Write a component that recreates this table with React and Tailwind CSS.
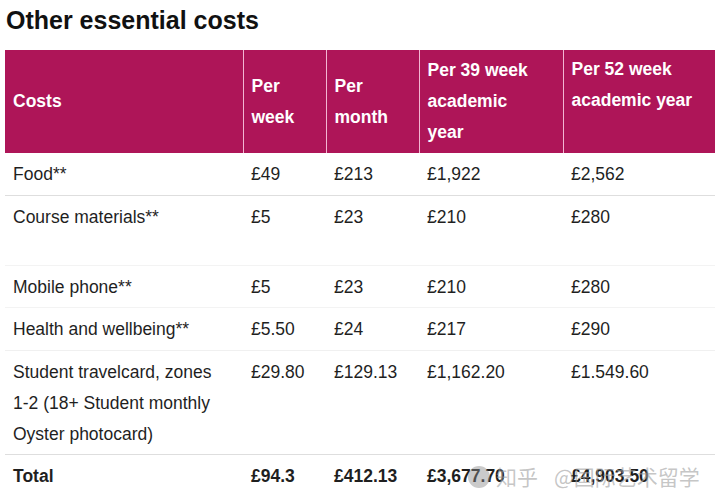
import React from "react";

const rows = [
  { name: "Food**", week: "£49", month: "£213", y39: "£1,922", y52: "£2,562", h: "h-[42px]", line: "border-[#dedede]" },
  { name: "Course materials**", week: "£5", month: "£23", y39: "£210", y52: "£280", h: "h-[70px]", line: "border-[#f3f3f3]" },
  { name: "Mobile phone**", week: "£5", month: "£23", y39: "£210", y52: "£280", h: "h-[42px]", line: "border-[#f3f3f3]" },
  { name: "Health and wellbeing**", week: "£5.50", month: "£24", y39: "£217", y52: "£290", h: "h-[43px]", line: "border-[#f0f0f0]" },
  {
    name: (
      <>
        Student travelcard, zones
        <br />
        1-2 (18+ Student monthly Oyster photocard)
      </>
    ),
    key: "travel",
    week: "£29.80",
    month: "£129.13",
    y39: "£1,162.20",
    y52: "£1.549.60",
    h: "h-[104px]",
    line: "border-[#dedede]",
  },
];

export default function App() {
  return (
    <div
      className="relative w-[720px] h-[501px] overflow-hidden bg-white text-[#1f1f1f]"
      style={{ fontFamily: '"Liberation Sans", Arial, sans-serif' }}
    >
      <h1 className="pl-[6px] pt-[4px] h-[50px] text-[25px] font-bold text-[#111] leading-[32px]">
        Other essential costs
      </h1>

      <table className="ml-[5px] w-[710px] table-fixed border-collapse text-[17.5px] leading-[31px]">
        <colgroup>
          <col className="w-[238px]" />
          <col className="w-[83px]" />
          <col className="w-[93px]" />
          <col className="w-[144px]" />
          <col className="w-[152px]" />
        </colgroup>
        <thead>
          <tr className="h-[103px] bg-[#ae1558] text-white font-bold">
            <th className="px-2 text-left align-middle border-r border-[#f3b6d2]">Costs</th>
            <th className="px-2 text-left align-middle border-r border-[#f3b6d2]">Per week</th>
            <th className="px-2 text-left align-middle border-r border-[#f3b6d2]">Per month</th>
            <th className="px-2 text-left align-middle border-r border-[#f3b6d2]">
              Per 39 week
              <br />
              academic
              <br />
              year
            </th>
            <th className="px-2 pt-[4px] text-left align-top">
              Per 52 week
              <br />
              academic year
            </th>
          </tr>
        </thead>
        <tbody>
          {rows.map((r) => (
            <tr key={r.key || r.name} className={`${r.h} border-b ${r.line}`}>
              <td className="px-2 pt-[6px] align-top">{r.name}</td>
              <td className="px-2 pt-[6px] align-top">{r.week}</td>
              <td className="px-2 pt-[6px] align-top">{r.month}</td>
              <td className="px-2 pt-[6px] align-top">{r.y39}</td>
              <td className="px-2 pt-[6px] align-top">{r.y52}</td>
            </tr>
          ))}
          <tr className="h-[43px] font-bold">
            <td className="px-2 pt-[6px] align-top">Total</td>
            <td className="px-2 pt-[6px] align-top">£94.3</td>
            <td className="px-2 pt-[6px] align-top">£412.13</td>
            <td className="px-2 pt-[6px] align-top">£3,677.70</td>
            <td className="px-2 pt-[6px] align-top">£4,903.50</td>
          </tr>
        </tbody>
      </table>

      {/* watermark */}
      <div
        className="absolute left-[468px] top-[461px] flex items-center gap-[6px] text-[21px] text-[#a0a0a0]/60"
        style={{ fontFamily: '"Noto Sans CJK SC", sans-serif' }}
      >
        <span className="w-[22px] h-[22px] rounded-full bg-[#8a8a8a]/45" />
        <span>知乎</span>
        <span className="ml-[10px]">@国际艺术留学</span>
      </div>
    </div>
  );
}
